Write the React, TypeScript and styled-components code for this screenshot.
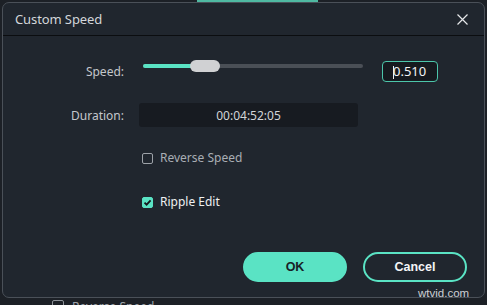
import React from 'react';
import styled, { createGlobalStyle } from 'styled-components';

const GlobalStyle = createGlobalStyle`
  html, body {
    margin: 0;
    padding: 0;
    background: #1c2026;
  }
  body {
    font-family: "Noto Sans", "Open Sans", sans-serif;
    overflow: hidden;
  }
`;

const TEAL = '#5ae3c4';

const Screen = styled.div`
  position: relative;
  width: 487px;
  height: 305px;
  box-sizing: border-box;
  padding: 2px 2px 0 2px;
  background: #1c2026;
  overflow: hidden;
`;

// bits of the window lying behind the dialog
const BehindTab = styled.div`
  position: absolute;
  top: 0;
  left: 197px;
  width: 121px;
  height: 2px;
  background: #4fb9a2;
`;

const BehindRow = styled.div`
  position: absolute;
  top: 300px;
  left: 52px;
  display: flex;
  align-items: flex-start;
  gap: 8px;
  color: #9ea3a9;
  font-size: 12px;
  line-height: 14px;
`;

const BehindBox = styled.div`
  width: 12px;
  height: 12px;
  box-sizing: border-box;
  border: 1px solid #8d9298;
  border-radius: 2px;
`;

const Dialog = styled.div`
  position: relative;
  z-index: 1;
  width: 483px;
  height: 296px;
  box-sizing: border-box;
  border: 1px solid #4a5058;
  border-radius: 7px;
  background: #20262e;
  display: flex;
  flex-direction: column;
  overflow: hidden;
`;

const Header = styled.div`
  height: 32px;
  flex: none;
  display: flex;
  align-items: center;
  justify-content: space-between;
  padding: 0 16px 0 12px;
  border-bottom: 1px solid #0b0d10;
`;

const Title = styled.div`
  color: #d3d6da;
  font-size: 13px;
  letter-spacing: -0.1px;
`;

const CloseButton = styled.button`
  width: 12px;
  height: 12px;
  padding: 0;
  border: none;
  background: transparent;
  display: flex;
  align-items: center;
  justify-content: center;
  cursor: pointer;
`;

const Body = styled.div`
  flex: 1;
  display: flex;
  flex-direction: column;
  padding-top: 24px;
`;

const Row = styled.div<{ $top?: number; $height: number }>`
  display: flex;
  align-items: center;
  height: ${p => p.$height}px;
  margin-top: ${p => p.$top || 0}px;
`;

const Label = styled.div`
  width: 121px;
  flex: none;
  text-align: right;
  color: #c4c7cb;
  font-size: 12px;
`;

const Slider = styled.div`
  position: relative;
  align-self: flex-start;
  width: 220px;
  height: 12px;
  margin-left: 19px;
  flex: none;
  display: flex;
  align-items: center;
`;

const Track = styled.div`
  width: 100%;
  height: 4px;
  border-radius: 2px;
  background: #4a4f56;
  overflow: hidden;
`;

const TrackFill = styled.div`
  height: 100%;
  background: ${TEAL};
`;

const Thumb = styled.div`
  position: absolute;
  top: 0;
  width: 30px;
  height: 12px;
  border-radius: 6px;
  background: #d0d1d3;
`;

const ValueInput = styled.div`
  position: relative;
  width: 56px;
  height: 21px;
  margin-left: 19px;
  box-sizing: border-box;
  border: 1px solid #4cc6aa;
  border-radius: 4px;
  background: #161a1f;
  color: #f2f3f4;
  font-size: 13px;
  line-height: 19px;
  padding-left: 10px;

  &::before {
    content: '';
    position: absolute;
    left: 10px;
    top: 4px;
    width: 1px;
    height: 13px;
    background: #f0f0f0;
  }
`;

const Field = styled.div`
  width: 219px;
  height: 24px;
  margin-left: 15px;
  border-radius: 3px;
  background: #171b21;
  color: #d2d5d8;
  font-size: 12px;
  display: flex;
  align-items: center;
  justify-content: center;
`;

const CheckRow = styled.label<{ $top: number; $checked?: boolean }>`
  display: flex;
  align-items: center;
  gap: 7px;
  height: 12px;
  line-height: 12px;
  margin-top: ${p => p.$top}px;
  padding-left: 139px;
  color: ${p => (p.$checked ? '#eef0f1' : '#a9aeb4')};
  font-size: 12px;
  cursor: pointer;
`;

const Box = styled.span<{ $checked?: boolean }>`
  width: 11px;
  height: 11px;
  flex: none;
  box-sizing: border-box;
  border-radius: 2px;
  border: 1px solid ${p => (p.$checked ? TEAL : '#9da2a8')};
  background: ${p => (p.$checked ? TEAL : 'transparent')};
  display: flex;
  align-items: center;
  justify-content: center;
`;

const Footer = styled.div`
  margin-top: auto;
  display: flex;
  justify-content: flex-end;
  gap: 16px;
  padding: 0 17px 15px 0;
`;

const Button = styled.button<{ $primary?: boolean }>`
  width: 104px;
  height: 30px;
  box-sizing: border-box;
  border-radius: 15px;
  border: 2px solid ${TEAL};
  background: ${p => (p.$primary ? TEAL : 'transparent')};
  color: ${p => (p.$primary ? '#182026' : '#f4f5f6')};
  font-family: "Liberation Sans", Arial, sans-serif;
  font-weight: bold;
  font-size: 12.5px;
  cursor: pointer;
`;

const Watermark = styled.div`
  position: absolute;
  z-index: 2;
  left: 418px;
  top: 287px;
  color: rgba(225, 228, 232, 0.9);
  font-family: "Liberation Sans", Arial, sans-serif;
  font-size: 11.5px;
`;

const Check = ({ checked }: { checked?: boolean }) => (
  <Box $checked={checked}>
    {checked && (
      <svg width="9" height="9" viewBox="0 0 9 9">
        <polyline points="1.5,4.6 3.6,6.7 7.6,2.3" fill="none" stroke="#14191e" strokeWidth="1.8" />
      </svg>
    )}
  </Box>
);

const App = () => {
  const speed = 0.51;
  const thumbLeft = 47;

  return (
    <Screen>
      <GlobalStyle />
      <BehindTab />
      <BehindRow>
        <BehindBox />
        <span>Reverse Speed</span>
      </BehindRow>

      <Dialog>
        <Header>
          <Title>Custom Speed</Title>
          <CloseButton aria-label="Close">
            <svg width="11" height="11" viewBox="0 0 11 11">
              <path d="M0.5 0.5 L10.5 10.5 M10.5 0.5 L0.5 10.5" stroke="#e6e8ea" strokeWidth="1.2" />
            </svg>
          </CloseButton>
        </Header>

        <Body>
          <Row $height={22}>
            <Label>Speed:</Label>
            <Slider>
              <Track>
                <TrackFill style={{ width: thumbLeft + 4 }} />
              </Track>
              <Thumb style={{ left: thumbLeft }} />
            </Slider>
            <ValueInput>{speed.toFixed(3)}</ValueInput>
          </Row>

          <Row $top={21} $height={24}>
            <Label>Duration:</Label>
            <Field>00:04:52:05</Field>
          </Row>

          <CheckRow $top={25}>
            <Check />
            Reverse Speed
          </CheckRow>

          <CheckRow $top={32} $checked>
            <Check checked />
            Ripple Edit
          </CheckRow>
        </Body>

        <Footer>
          <Button $primary>OK</Button>
          <Button>Cancel</Button>
        </Footer>
      </Dialog>

      <Watermark>wtvid.com</Watermark>
    </Screen>
  );
};

export default App;
